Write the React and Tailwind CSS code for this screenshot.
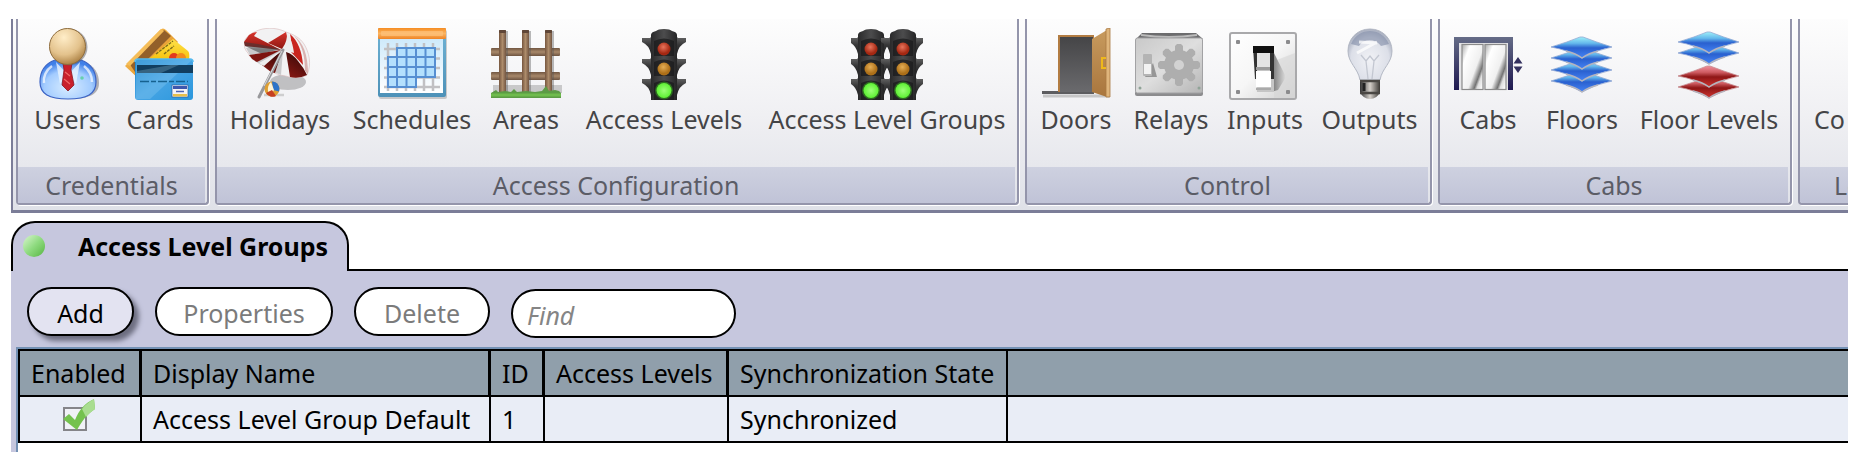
import React from "react";

function Gradient({ id, from, via, to, x2 = 0, y2 = 1 }) {
  return (
    <linearGradient id={id} x1="0" y1="0" x2={x2} y2={y2}>
      <stop offset="0" stopColor={from} />
      {via && <stop offset="0.5" stopColor={via} />}
      <stop offset="1" stopColor={to} />
    </linearGradient>
  );
}

function Icon({ children }) {
  return (
    <svg viewBox="0 0 72 72" className="h-[72px] w-[72px] shrink-0" aria-hidden="true">
      {children}
    </svg>
  );
}

function UsersIcon() {
  return (
    <Icon>
      <defs>
        <radialGradient id="user-head" cx="0.4" cy="0.25" r="0.8">
          <stop offset="0" stopColor="#ffedc8" />
          <stop offset="0.6" stopColor="#e3c28c" />
          <stop offset="1" stopColor="#a67a3c" />
        </radialGradient>
        <radialGradient id="user-body" cx="0.5" cy="0.7" r="0.65">
          <stop offset="0" stopColor="#d8ecff" />
          <stop offset="0.65" stopColor="#a3ccff" />
          <stop offset="1" stopColor="#3f7fe8" />
        </radialGradient>
      </defs>
      <path d="M24 34C13 37 9 46 9 55c0 12 9 16 28 16s30-4 30-16c0-9-4-18-16-21z" fill="#5b5b63" opacity="0.45" />
      <path d="M23 32C12 36 8 45 8 54c0 12 9 17 28 17s28-5 28-17c0-9-4-18-15-22z" fill="url(#user-body)" stroke="#3c63c4" strokeWidth="1.2" />
      <path d="M20 38c-6 4-9 11-8 17M52 38c5 4 8 10 8 16" stroke="#fff" strokeWidth="2.5" fill="none" opacity="0.7" />
      <path d="M24 34l11 12-7 10zM48 34L37 46l7 10z" fill="#e9f4ff" opacity="0.8" />
      <path d="M31 35h9l-1 7 3 15-6 6-6-6 2-15z" fill="#c9202b" stroke="#8c1720" strokeWidth="0.8" />
      <path d="M33 44l5 4M32 51l6 5" stroke="#ee6a66" strokeWidth="1.2" />
      <circle cx="50" cy="50" r="1.8" fill="#66cfae" />
      <circle cx="37" cy="19" r="18.5" fill="#5b5b63" opacity="0.5" />
      <circle cx="35.5" cy="18.5" r="18" fill="url(#user-head)" stroke="#8f6d3d" strokeWidth="1" />
    </Icon>
  );
}

function CardsIcon() {
  return (
    <Icon>
      <defs>
        <Gradient id="card-gold" from="#ffd36b" via="#eaa43a" to="#d98b20" x2={1} />
        <Gradient id="card-yellow" from="#ffe14a" to="#f6c30e" />
        <Gradient id="card-blue" from="#1c86cf" via="#46a4e4" to="#2b97dc" x2={1} />
      </defs>
      <path d="M1 38L36 2q3-3 6 0l12 12-38 38z" fill="url(#card-gold)" />
      <path d="M5 35L40 2l7 6-36 36z" fill="#93602a" />
      <path d="M2 36L37 1l3 2L6 38z" fill="#f5bd59" />
      <path d="M24 32L49 11l15 12q2 2 1 9z" fill="url(#card-yellow)" />
      <path d="M32 26l17-13M40 26l10-8" stroke="#7b6b1a" strokeWidth="1.3" strokeDasharray="3 1" />
      <circle cx="50" cy="30" r="5" fill="#e23a1d" />
      <circle cx="57" cy="30" r="5" fill="#f28b1b" />
      <rect x="11" y="31" width="58" height="41" rx="3" fill="url(#card-blue)" />
      <path d="M12 71V32h56L26 71z" fill="#9cd4f4" opacity="0.28" />
      <path d="M11 34q0-3 3-3h52q3 0 3 3" fill="none" stroke="#55baf0" strokeWidth="1.5" />
      <rect x="13" y="37" width="56" height="8" fill="#123e5f" />
      <path d="M13 43L47 37h8L37 45H13z" fill="#4e7d98" opacity="0.6" />
      <path d="M16 53.5h48" stroke="#16618f" strokeWidth="1.6" strokeDasharray="9 2 5 2" />
      <rect x="48" y="57" width="16" height="12" fill="#f5f3f5" stroke="#285aa0" strokeWidth="0.7" />
      <rect x="49" y="58" width="14" height="3" fill="#3d57ad" />
      <rect x="49" y="66" width="14" height="2.5" fill="#e8bf4a" />
      <path d="M52 63.5h8" stroke="#4c63b4" strokeWidth="1.5" />
    </Icon>
  );
}

function HolidaysIcon() {
  return (
    <Icon>
      <defs>
        <Gradient id="umbrella-red" from="#d8342c" to="#8e1712" />
        <Gradient id="umbrella-dark" from="#4d0d0b" to="#9c1c16" x2={-0.5} />
      </defs>
      <ellipse cx="44" cy="54" rx="18" ry="8" fill="#a9a9ac" opacity="0.7" />
      <path d="M20 67h20" stroke="#999" strokeWidth="2.5" opacity="0.4" />
      <path d="M0 15C1 9 7 5 15 2 24-1 34 0 42 4c9 3 14 6 18 12 5 8 8 20 3 31-5 3-12 3-18 2-5-2-10-1-16-5-5-2-9-5-12-9C10 33 6 30 4 25 1 22 0 19 0 15z" fill="#f2f2f3" stroke="#d9b9b9" strokeWidth="0.6" />
      <path d="M37 21L2 20l4 7 31-5-26 11 6 4 21-14-10 20 9 4 2-25z" fill="#c9c9cb" />
      <path d="M0 14L5 7q4-3 8-3l-3 4 27 14L1 18z" fill="url(#umbrella-red)" />
      <path d="M1 18L0 14l14 2 22 5-18 5z" fill="#3b3b3d" opacity="0.55" />
      <path d="M5 27l32-5-24 12q-5-2-8-7z" fill="#7d1410" />
      <path d="M18 37l20-14-7 22-4-1z" fill="url(#umbrella-dark)" />
      <path d="M15 35l22-12-17 15z" fill="#ededee" />
      <path d="M24 15L42 4q3 7-4 17z" fill="url(#umbrella-red)" />
      <path d="M46 49L42 24q7 2 12 9 6 7 9 14-8 4-17 2z" fill="url(#umbrella-dark)" />
      <path d="M46 6c8 7 12 17 13 31L47 24q1-10-1-18z" fill="#c9251f" />
      <path d="M43 5c4 5 6 12 7 20l-11-3q5-8 4-17z" fill="#ededee" />
      <path d="M50 8c9 6 14 18 14 38l-3-3C61 28 58 16 50 8z" fill="#d9b2b0" />
      <path d="M39 22L15 69" stroke="#98989b" strokeWidth="3" strokeLinecap="round" />
      <path d="M38 23L20 58" stroke="#dcdcde" strokeWidth="1" />
      <circle cx="28" cy="61" r="7.5" fill="#e0a032" />
      <path d="M28 53.5a7.500 7.500 0 0 1 7 10L29 62z" fill="#2d74c9" />
      <path d="M27 54c-4 4-4 9-1 14l4-6z" fill="#fff4d6" />
      <path d="M22 65a7.500 7.500 0 0 0 10 3l-4-6z" fill="#c53f22" />
    </Icon>
  );
}

function SchedulesIcon() {
  const lines = [0, 1, 2, 3, 4, 5];
  return (
    <Icon>
      <defs>
        <Gradient id="cal-bar" from="#f58c22" via="#fbb562" to="#ef8425" />
        <Gradient id="cal-frame" from="#6fb3d5" to="#4d91b8" />
        <Gradient id="cal-page" from="#cfeafb" to="#ffffff" />
      </defs>
      <rect x="3" y="2" width="68" height="69" rx="2" fill="#777" opacity="0.35" />
      <rect x="2" y="0" width="68" height="69" rx="2" fill="url(#cal-frame)" />
      <rect x="4" y="11" width="63" height="54" fill="url(#cal-page)" />
      <rect x="2" y="0" width="68" height="11" rx="1" fill="url(#cal-bar)" />
      <rect x="5" y="3" width="62" height="5" rx="1" fill="#fdc27c" opacity="0.7" />
      {lines.map((i) => (
        <g key={i} stroke="#c1c1c4" strokeWidth="2.5">
          <path d={`M${12 + i * 9} 15V63`} />
          {i < 5 && <path d={`M8 ${21 + i * 9.5}H64`} />}
        </g>
      ))}
      <path d="M21 20H59V49H40V59H12V29H21z" fill="#b4e0fd" />
      <path
        d="M21 20H59V49H40V59H12V29H21zM12 39H59M12 49H40M21 30V59M30.5 20V59M40 20V49M49.5 20V49M21 29H59"
        fill="none"
        stroke="#568fd2"
        strokeWidth="2"
      />
    </Icon>
  );
}

function AreasIcon() {
  return (
    <Icon>
      <defs>
        <Gradient id="fence-post" from="#76563f" via="#ad8c6b" to="#735642" x2={1} y2={0} />
        <Gradient id="fence-rail" from="#725641" via="#a8886a" to="#6e5441" />
      </defs>
      <rect x="3" y="57" width="69" height="8" fill="#777" opacity="0.35" />
      <rect x="1" y="20" width="69" height="8" rx="1" fill="url(#fence-rail)" />
      <rect x="1" y="44" width="69" height="8" rx="1" fill="url(#fence-rail)" />
      {[9, 32, 55].map((x) => (
        <g key={x}>
          <rect x={x + 1} y="3" width="8" height="63" fill="#555" opacity="0.4" />
          <rect x={x} y="2" width="7" height="63" rx="1" fill="url(#fence-post)" />
          <rect x={x} y="2" width="7" height="3" rx="1" fill="#5f4637" />
        </g>
      ))}
      <path d="M1 65l5-3 2 2 7-1 6 1 3-3 3 3 9-1 9 1 7-1 4-5 3 5 6-1 4 1 2 2v5H1z" fill="#5c9b45" />
      <path d="M1 67h70" stroke="#6fbb4d" strokeWidth="3" />
    </Icon>
  );
}

function TrafficLight({ x }) {
  return (
    <g transform={`translate(${x} 0)`}>
      {[10, 31, 51].map((y) => (
        <path key={y} d={`M-22 ${y}h8l2 -2h24l2 2h8v4q-7 3 -9 12h-26q-2 -9 -9 -12z`} fill="url(#lamp-flap)" />
      ))}
      <path d="M-13 72V7q0-3 5-4 2-2 8-2t8 2q5 1 5 4v65z" fill="url(#lamp-body)" />
      <path d="M-10 13q10-5 20 0v15h-20zM-10 34q10-5 20 0v14h-20zM-10 55q10-5 20 0v17h-20z" fill="#1b1b1c" opacity="0.75" />
      <circle cy="21" r="6.5" fill="url(#lamp-red)" />
      <circle cy="41" r="6.5" fill="url(#lamp-amber)" />
      <circle cy="62.5" r="9" fill="#2d6b20" />
      <circle cy="62.5" r="7.5" fill="url(#lamp-green)" />
    </g>
  );
}

function LampDefs() {
  return (
    <defs>
      <Gradient id="lamp-body" from="#2a2a2b" via="#4c4c4d" to="#262627" x2={1} y2={0} />
      <Gradient id="lamp-flap" from="#6b6b6b" via="#363637" to="#232324" />
      <radialGradient id="lamp-red" cx="0.45" cy="0.35">
        <stop offset="0" stopColor="#e8745c" />
        <stop offset="1" stopColor="#a52812" />
      </radialGradient>
      <radialGradient id="lamp-amber" cx="0.45" cy="0.35">
        <stop offset="0" stopColor="#e4ad55" />
        <stop offset="1" stopColor="#ad6f18" />
      </radialGradient>
      <radialGradient id="lamp-green">
        <stop offset="0" stopColor="#9dff78" />
        <stop offset="1" stopColor="#5df033" />
      </radialGradient>
    </defs>
  );
}

function AccessLevelsIcon() {
  return (
    <Icon>
      <LampDefs />
      <TrafficLight x={36} />
    </Icon>
  );
}

function AccessLevelGroupsIcon() {
  return (
    <Icon>
      <TrafficLight x={20} />
      <TrafficLight x={52} />
    </Icon>
  );
}

function DoorsIcon() {
  return (
    <Icon>
      <defs>
        <Gradient id="door-leaf" from="#c79a5e" to="#a9763d" />
        <Gradient id="door-hole" from="#454547" to="#6a6a6d" />
      </defs>
      <path d="M3 68h66" stroke="#aaa" strokeWidth="3" opacity="0.6" />
      <rect x="2" y="63" width="52" height="3" fill="#5d5d60" />
      <rect x="18" y="7" width="36" height="57" fill="#b27c42" />
      <rect x="20" y="9" width="33" height="55" fill="url(#door-hole)" />
      <path d="M52 11L67 2V69L52 64z" fill="url(#door-leaf)" />
      <path d="M66 1l4-1v69l-4 0z" fill="#dfb57b" stroke="#a87843" strokeWidth="0.8" />
      <path d="M66 30h-4v10h4" fill="none" stroke="#eeb81c" strokeWidth="2" />
    </Icon>
  );
}

function RelaysIcon() {
  return (
    <Icon>
      <defs>
        <Gradient id="relay-box" from="#c9c9c9" via="#dedede" to="#b5b5b5" x2={1} />
      </defs>
      <path d="M1 11l6-6h54l7 6z" fill="#6c6c6e" />
      <path d="M6 7q28 4 56 0" stroke="#bbb" strokeWidth="2" fill="none" />
      <rect x="0" y="63" width="68" height="5" rx="2" fill="#8c8c8e" />
      <rect x="0.5" y="10" width="67" height="55" rx="2" fill="url(#relay-box)" stroke="#a2a2a4" />
      {[0, 45, 90, 135].map((angle) => (
        <path key={angle} d="M40 18l2-2h4l2 2v38l-2 2h-4l-2-2z" fill="#aeaeae" transform={`rotate(${angle} 44 37)`} />
      ))}
      <circle cx="44" cy="37" r="15" fill="#aeaeae" />
      <circle cx="44" cy="37" r="5" fill="#d2d2d2" />
      <path d="M10 49l8-14 4 14z" fill="#777" opacity="0.7" />
      <rect x="8" y="26" width="9" height="22" rx="1" fill="#b4b4b4" />
      <rect x="9" y="36" width="7" height="10" fill="#f2f2f2" />
      <circle cx="5" cy="60" r="1.5" fill="#8fa397" />
      <circle cx="64" cy="60" r="1.5" fill="#8fa397" />
    </Icon>
  );
}

function InputsIcon() {
  return (
    <Icon>
      <defs>
        <Gradient id="switch-plate" from="#ffffff" via="#f6f6f6" to="#cfcfcf" x2={1} />
        <Gradient id="switch-shadow" from="#6f6f6f" to="#dedede" x2={1} y2={0} />
      </defs>
      <rect x="1" y="5" width="66" height="66" rx="2" fill="url(#switch-plate)" stroke="#a9a9ab" strokeWidth="2" />
      <path d="M66 25L45 33v37h21z" fill="#d5d5d5" opacity="0.6" />
      <path d="M45 25l12 24-8 13-7 2z" fill="url(#switch-shadow)" />
      <path d="M24 18h21v46H28z" fill="#c5c5c5" />
      <path d="M24 18h21v33h-4V30H28v21h-2z" fill="#333" />
      <rect x="24" y="18" width="21" height="7" fill="#111" />
      <rect x="28" y="25" width="13" height="15" fill="#e4e4e4" />
      <rect x="27" y="39" width="14" height="3" fill="#9c9c9c" />
      <rect x="27" y="43" width="15" height="16" fill="#fff" />
      <path d="M27 61h15" stroke="#aaa" strokeWidth="2" />
      {[
        [9, 14],
        [59, 14],
        [9, 64],
        [59, 64],
      ].map(([x, y]) => (
        <rect key={`${x}-${y}`} x={x - 2} y={y - 2} width="4" height="4" rx="1" fill="#8b8b8d" />
      ))}
    </Icon>
  );
}

function OutputsIcon() {
  return (
    <Icon>
      <defs>
        <radialGradient id="bulb-glass" cx="0.5" cy="0.6" r="0.62">
          <stop offset="0" stopColor="#f1f2f6" />
          <stop offset="0.7" stopColor="#dcdfe8" />
          <stop offset="1" stopColor="#9fa6b8" />
        </radialGradient>
        <Gradient id="bulb-base" from="#333333" via="#d5d0ca" to="#3a3733" x2={1} y2={0} />
      </defs>
      <path
        d="M36 1c13 0 22 10 22 22 0 12-10 17-12 29H26C24 40 14 35 14 23 14 11 23 1 36 1z"
        fill="url(#bulb-glass)"
        stroke="#b3b8c4"
      />
      <path d="M17 16c4-9 11-13 19-13s15 4 19 13l-8 2c-5-7-17-8-22 0z" fill="#8590aa" opacity="0.65" />
      <path d="M23 25l20-11M25 14l18 1" stroke="#fff" strokeWidth="3" opacity="0.75" />
      <path d="M27 27l5 6 4-5 4 5 5-6M32 33l2 18M40 33l-2 18" stroke="#c3c7d1" strokeWidth="1.3" fill="none" />
      <path d="M26 52h20v12q-3 7-10 7t-10-7z" fill="url(#bulb-base)" />
      <path d="M26 53h20M26 65h20" stroke="#4a4743" strokeWidth="2.5" />
      <path d="M30 55v8" stroke="#222" strokeWidth="3" />
    </Icon>
  );
}

function CabsIcon() {
  return (
    <Icon>
      <defs>
        <Gradient id="cab-frame" from="#656c87" to="#1e1850" />
        <linearGradient id="cab-door" x1="0" y1="0.1" x2="1" y2="0.9">
          <stop offset="0" stopColor="#b9b9b9" />
          <stop offset="0.2" stopColor="#ffffff" />
          <stop offset="0.6" stopColor="#f0f0f0" />
          <stop offset="0.78" stopColor="#737373" />
          <stop offset="0.86" stopColor="#dedede" />
          <stop offset="1" stopColor="#fafafa" />
        </linearGradient>
      </defs>
      <path d="M2 9H61V62H56V15H7V62H2z" fill="url(#cab-frame)" />
      <rect x="7" y="15" width="49" height="47" fill="#e4e4e6" />
      <rect x="10" y="16.5" width="21" height="45" fill="url(#cab-door)" stroke="#8a8a8a" strokeWidth="1.2" />
      <rect x="33" y="16.5" width="21" height="45" fill="url(#cab-door)" stroke="#8a8a8a" strokeWidth="1.2" />
      <path d="M66 29l4.500 6.500h-9zM66 45l4.500-6.500h-9z" fill="#34315f" />
    </Icon>
  );
}

function Layer({ y, tone }) {
  const blue = tone === "blue";
  return (
    <g>
      <path
        d={`M5 ${y}Q22 ${y - 5} 34 ${y - 10}h3Q50 ${y - 5} 66 ${y}Q50 ${y + 3} 36 ${y + 11}Q22 ${y + 3} 5 ${y}z`}
        fill={blue ? "url(#layer-blue)" : "url(#layer-red)"}
        stroke={blue ? "#93a9d4" : "#c88d90"}
        strokeWidth="0.8"
      />
      <path d={`M20 ${y + 4}Q29 ${y + 6} 36 ${y + 11}Q43 ${y + 6} 52 ${y + 4}`} fill="none" stroke="#b4b4be" strokeWidth="1.5" />
    </g>
  );
}

function FloorsIcon() {
  return (
    <Icon>
      <defs>
        <linearGradient id="layer-blue" x1="0" y1="0" x2="0" y2="1">
          <stop offset="0" stopColor="#9ef0f8" />
          <stop offset="0.3" stopColor="#64b8ec" />
          <stop offset="0.52" stopColor="#2a60cf" />
          <stop offset="1" stopColor="#4584f5" />
        </linearGradient>
        <linearGradient id="layer-red" x1="0" y1="0" x2="0" y2="1">
          <stop offset="0" stopColor="#f08f9c" />
          <stop offset="0.3" stopColor="#cf5c62" />
          <stop offset="0.52" stopColor="#8e1616" />
          <stop offset="1" stopColor="#cf3430" />
        </linearGradient>
      </defs>
      <Layer y={53} tone="blue" />
      <Layer y={42} tone="blue" />
      <Layer y={30} tone="blue" />
      <Layer y={19} tone="blue" />
    </Icon>
  );
}

function FloorLevelsIcon() {
  return (
    <Icon>
      <Layer y={59} tone="red" />
      <Layer y={48} tone="red" />
      <Layer y={25} tone="blue" />
      <Layer y={14} tone="blue" />
    </Icon>
  );
}

const ribbonGroups = [
  {
    name: "Credentials",
    items: [
      { label: "Users", icon: UsersIcon, width: "w-[95px]" },
      { label: "Cards", icon: CardsIcon, width: "w-[90px]" },
    ],
  },
  {
    name: "Access Configuration",
    items: [
      { label: "Holidays", icon: HolidaysIcon, width: "w-[122px]" },
      { label: "Schedules", icon: SchedulesIcon, width: "w-[142px]" },
      { label: "Areas", icon: AreasIcon, width: "w-[86px]" },
      { label: "Access Levels", icon: AccessLevelsIcon, width: "w-[190px]" },
      { label: "Access Level Groups", icon: AccessLevelGroupsIcon, width: "w-[256px]" },
    ],
  },
  {
    name: "Control",
    items: [
      { label: "Doors", icon: DoorsIcon, width: "w-[94px]" },
      { label: "Relays", icon: RelaysIcon, width: "w-[96px]" },
      { label: "Inputs", icon: InputsIcon, width: "w-[92px]" },
      { label: "Outputs", icon: OutputsIcon, width: "w-[117px]" },
    ],
  },
  {
    name: "Cabs",
    items: [
      { label: "Cabs", icon: CabsIcon, width: "w-[92px]" },
      { label: "Floors", icon: FloorsIcon, width: "w-[96px]" },
      { label: "Floor Levels", icon: FloorLevelsIcon, width: "w-[158px]" },
    ],
  },
];

function RibbonGroup({ name, items }) {
  return (
    <section className="flex shrink-0 flex-col rounded-b border-2 border-t-0 border-[#9495ab] shadow-[1px_1px_0_#ffffff]">
      <div className="flex px-0.5 pb-[30px] pt-[9px]">
        {items.map(({ label, icon: ItemIcon, width }) => (
          <button key={label} className={`flex shrink-0 flex-col items-center gap-px ${width}`}>
            <ItemIcon />
            <span className="whitespace-nowrap leading-9">{label}</span>
          </button>
        ))}
      </div>
      <h2 className="mr-0.5 bg-linear-to-b from-[#ced1e0] to-[#c0c3d7] text-center leading-9 text-[#5b5c66]">{name}</h2>
    </section>
  );
}

function Ribbon() {
  return (
    <div className="flex gap-1.5 overflow-hidden border-b-[3px] border-l-2 border-[#7b7d98] bg-linear-to-b from-[#fdfdfd] via-[#f0f0f3] to-[#dfe1e8] pb-[5px] pl-[3px] text-[#444446]">
      {ribbonGroups.map((group) => (
        <RibbonGroup key={group.name} name={group.name} items={group.items} />
      ))}
      <section className="flex flex-1 flex-col overflow-hidden rounded-bl border-b-2 border-l-2 border-[#9495ab] shadow-[1px_1px_0_#ffffff]">
        <button className="flex flex-1 px-3.5 pt-[82px] leading-9">Co</button>
        <h2 className="bg-linear-to-b from-[#ced1e0] to-[#c0c3d7] pl-[34px] leading-9 text-[#5b5c66]">Lo</h2>
      </section>
    </div>
  );
}

function Toolbar() {
  return (
    <div className="flex items-start gap-[21px] px-4 pb-[9px] pt-4">
      <button className="h-[49px] w-[107px] rounded-full border-2 border-black bg-[#e3e3f1] pt-0.5 shadow-[5px_5px_5px_#6d6e80]">
        Add
      </button>
      <button disabled className="h-[49px] w-[178px] rounded-full border-2 border-black bg-white pt-0.5 text-[#7b7b7b]">
        Properties
      </button>
      <button disabled className="h-[49px] w-[136px] rounded-full border-2 border-black bg-white pt-0.5 text-[#7b7b7b]">
        Delete
      </button>
      <input
        type="text"
        aria-label="Find"
        placeholder="Find"
        className="mt-0.5 h-[49px] w-[225px] rounded-full border-2 border-black bg-white px-3.5 pt-0.5 italic outline-none placeholder:text-[#858585]"
      />
    </div>
  );
}

function EnabledCheckbox() {
  return (
    <label className="relative ml-8 block h-6 w-6">
      <input
        type="checkbox"
        defaultChecked
        aria-label="Enabled"
        className="block h-6 w-6 appearance-none border-2 border-[#858589] bg-[#f1f2f7]"
      />
      <svg viewBox="0 0 34 34" className="absolute -top-2 left-0 h-[34px] w-[34px]" aria-hidden="true">
        <path d="M0 20l6-5 6 6C16 11 22 4 31 0l1 10C24 15 19 22 14 31z" fill="#74c24e" />
        <path d="M19 10C23 5 27 2 31 0l1 10q-6 4-9 8z" fill="#a9dd90" />
      </svg>
    </label>
  );
}

const columns = ["Enabled", "Display Name", "ID", "Access Levels", "Synchronization State"];

const rows = [{ id: 1, name: "Access Level Group Default", levels: "", state: "Synchronized" }];

function GroupsTable() {
  const cell = "border-b-2 border-r-2 border-black px-[11px] py-0";
  return (
    <table className="w-full table-fixed border-separate border-spacing-0 border-l-2 border-t-2 border-black text-left text-black">
      <colgroup>
        <col className="w-[122px]" />
        <col className="w-[349px]" />
        <col className="w-[54px]" />
        <col className="w-[184px]" />
        <col className="w-[279px]" />
        <col />
      </colgroup>
      <thead>
        <tr className="h-[46px] bg-[#909fab]">
          {columns.map((column, i) => (
            <th
              key={column}
              scope="col"
              className={`whitespace-nowrap border-b-2 border-black px-[11px] py-0 font-normal ${i < 4 ? "border-r-[3px]" : "border-r-2"}`}
            >
              {column}
            </th>
          ))}
          <td className="border-b-2 border-black" />
        </tr>
      </thead>
      <tbody>
        {rows.map((row) => (
          <tr key={row.id} className="h-[46px] bg-[#e9edf6]">
            <td className={cell}>
              <EnabledCheckbox />
            </td>
            <td className={`${cell} whitespace-nowrap`}>{row.name}</td>
            <td className={cell}>{row.id}</td>
            <td className={cell}>{row.levels}</td>
            <td className={cell}>{row.state}</td>
            <td className="border-b-2 border-black" />
          </tr>
        ))}
      </tbody>
    </table>
  );
}

export default function App() {
  return (
    <div className="bg-white pb-[15px] pl-[11px] pr-2.5 pt-[19px] font-['Noto_Sans','Open_Sans',sans-serif] text-[25px] leading-9">
      <Ribbon />
      <main className="pt-2">
        <div className="flex" role="tablist">
          <button
            role="tab"
            aria-selected="true"
            className="flex h-[50px] w-[338px] items-center rounded-t-3xl border-2 border-b-0 border-black bg-[#c6c7de] pb-0.5 pl-2.5 font-bold text-black"
          >
            <span className="h-[22px] w-[22px] rounded-full bg-linear-to-br from-[#d9f5cf] via-[#8fdb80] to-[#55b53f]" />
            <span className="flex-1 whitespace-nowrap pl-3.5 text-center">Access Level Groups</span>
          </button>
          <div className="flex-1 border-b-2 border-black" />
        </div>
        <div className="bg-[#c6c7de]">
          <Toolbar />
          <div className="ml-[5px] border-l-2 border-t-2 border-[#7391b4] bg-white pb-[9px]">
            <GroupsTable />
          </div>
        </div>
      </main>
    </div>
  );
}
